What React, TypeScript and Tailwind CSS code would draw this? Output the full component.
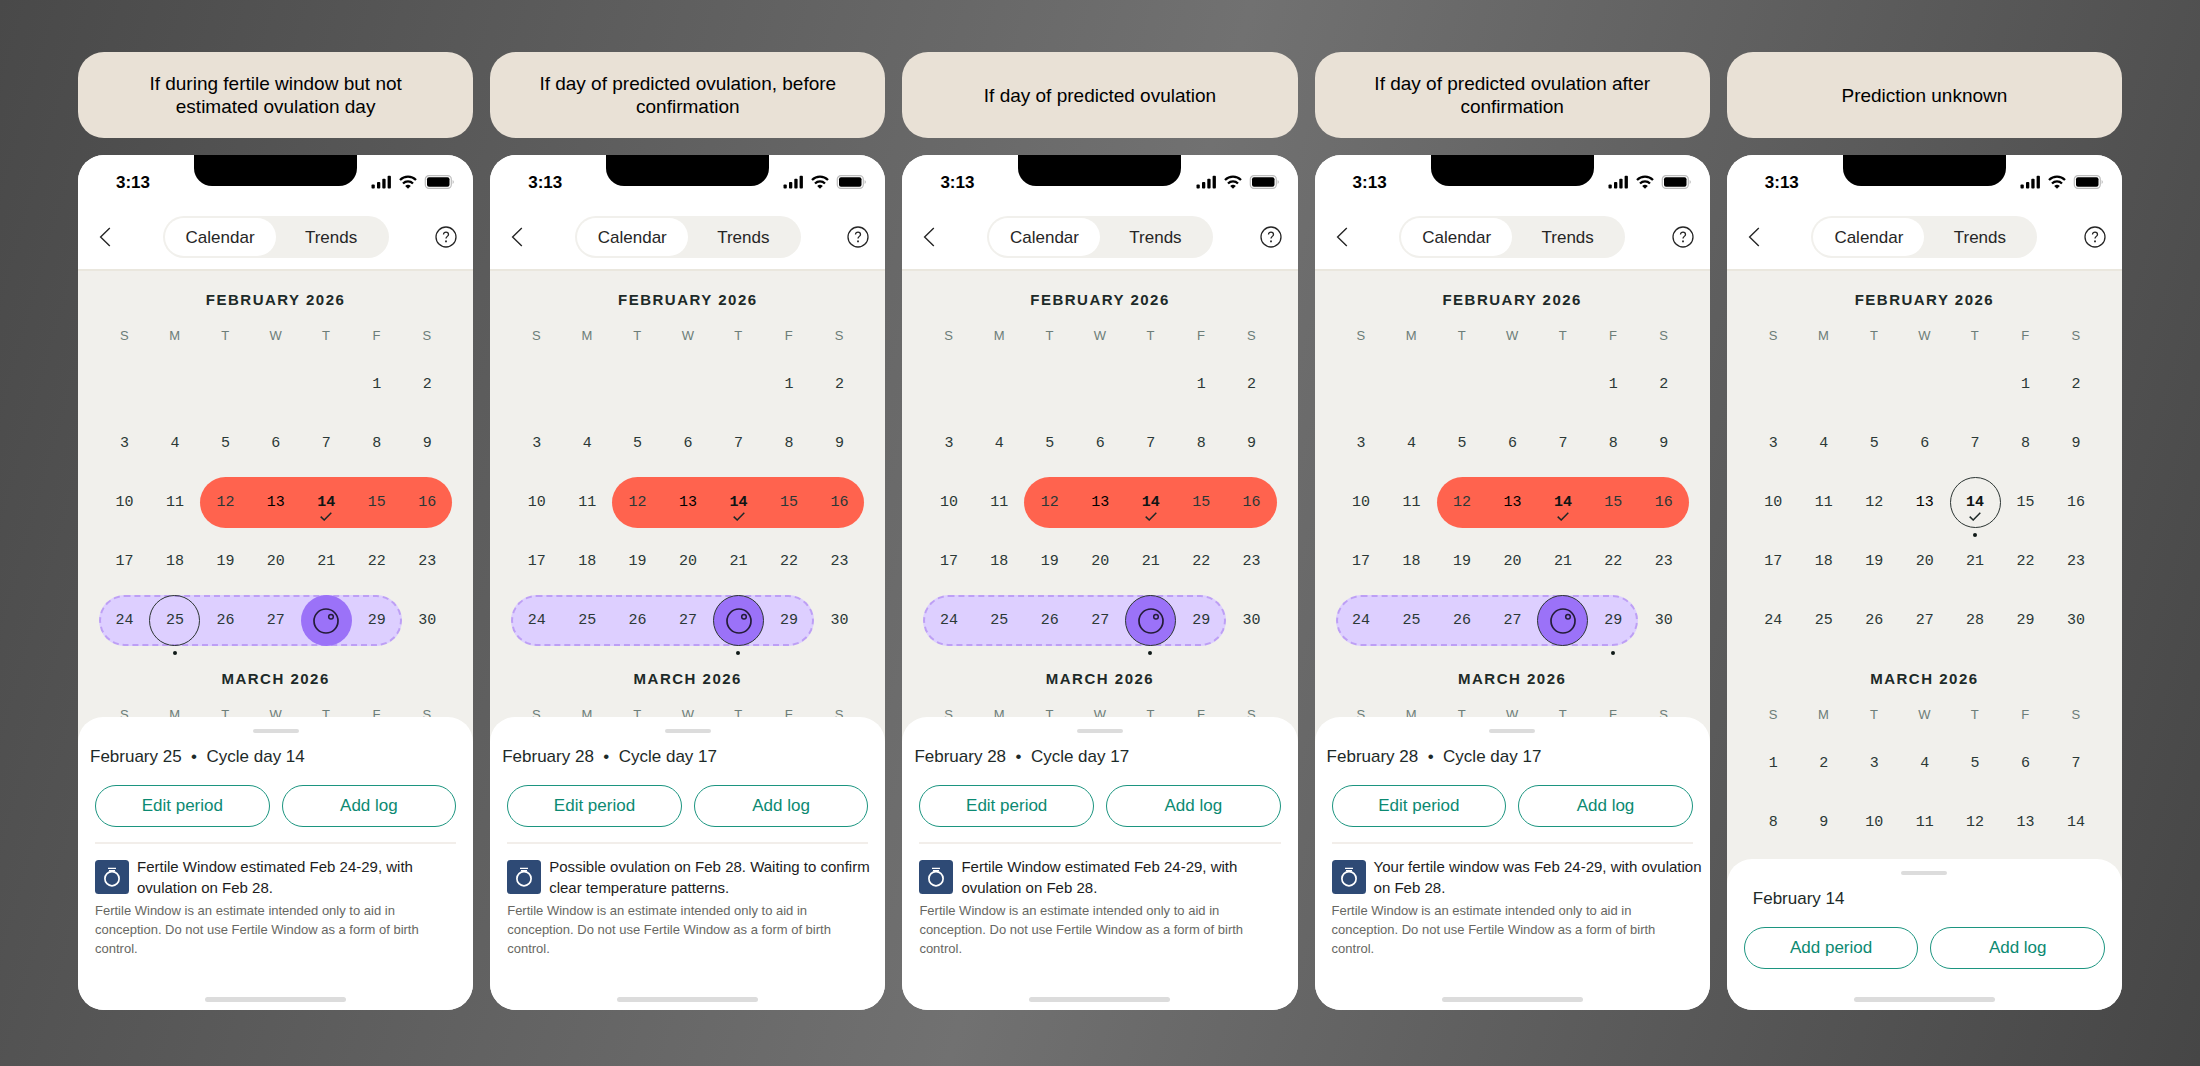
import React from "react";

type Range = { from: number; to: number };
type Phone = {
  label: string;
  title: string;
  inset?: boolean;
  periodAction: string;
  message?: string;
  period?: Range;
  fertile?: Range;
  ovulation?: number;
  selected: number;
  dot: number;
};

const DISCLAIMER =
  "Fertile Window is an estimate intended only to aid in conception. Do not use Fertile Window as a form of birth control.";
const PERIOD: Range = { from: 12, to: 16 };
const FERTILE: Range = { from: 24, to: 29 };
const ESTIMATED = "Fertile Window estimated Feb 24-29, with ovulation on Feb 28.";

const PHONES: Phone[] = [
  {
    label: "If during fertile window but not estimated ovulation day",
    title: "February 25  •  Cycle day 14",
    periodAction: "Edit period",
    message: ESTIMATED,
    period: PERIOD,
    fertile: FERTILE,
    ovulation: 28,
    selected: 25,
    dot: 25,
  },
  {
    label: "If day of predicted ovulation, before confirmation",
    title: "February 28  •  Cycle day 17",
    periodAction: "Edit period",
    message: "Possible ovulation on Feb 28. Waiting to confirm clear temperature patterns.",
    period: PERIOD,
    fertile: FERTILE,
    ovulation: 28,
    selected: 28,
    dot: 28,
  },
  {
    label: "If day of predicted ovulation",
    title: "February 28  •  Cycle day 17",
    periodAction: "Edit period",
    message: ESTIMATED,
    period: PERIOD,
    fertile: FERTILE,
    ovulation: 28,
    selected: 28,
    dot: 28,
  },
  {
    label: "If day of predicted ovulation after confirmation",
    title: "February 28  •  Cycle day 17",
    periodAction: "Edit period",
    message: "Your fertile window was Feb 24-29, with ovulation on Feb 28.",
    period: PERIOD,
    fertile: FERTILE,
    ovulation: 28,
    selected: 28,
    dot: 29,
  },
  {
    label: "Prediction unknown",
    title: "February 14",
    inset: true,
    periodAction: "Add period",
    selected: 14,
    dot: 14,
  },
];

function StatusIcons() {
  return (
    <svg width="83" height="14" viewBox="0 0 83 14" aria-hidden="true">
      <g fill="#000">
        <rect x="0.5" y="9.5" width="3.3" height="4" rx="0.9" />
        <rect x="6" y="7" width="3.3" height="6.5" rx="0.9" />
        <rect x="11.3" y="3.8" width="3.3" height="9.7" rx="0.9" />
        <rect x="16.6" y="0.8" width="3.3" height="12.7" rx="0.9" />
      </g>
      <g fill="none" stroke="#000" strokeWidth="2.3">
        <path d="M29 5a11.4 11.4 0 0 1 16 0" />
        <path d="M32 8.5a7.1 7.1 0 0 1 10 0" />
      </g>
      <path d="M34.2 11a4 4 0 0 1 5.6 0L37 13.8z" fill="#000" />
      <rect x="54.3" y="0.7" width="26" height="12.6" rx="3.6" fill="none" stroke="#bdbdbd" strokeWidth="1.2" />
      <rect x="56" y="2.2" width="22.5" height="9.6" rx="2" fill="#000" />
      <path d="M81.6 5c1 .5 1.2 1.2 1.2 2s-.2 1.5-1.2 2z" fill="#bdbdbd" />
    </svg>
  );
}

function EggIcon() {
  return (
    <svg width="26" height="26" viewBox="0 0 26 26" fill="none" stroke="#241c38" aria-hidden="true">
      <circle cx="13" cy="13" r="12" strokeWidth="1.7" />
      <circle cx="18" cy="8.7" r="2.3" strokeWidth="1.5" />
    </svg>
  );
}

function RingIcon() {
  return (
    <svg className="shrink-0" width="34" height="34" viewBox="0 0 34 34" fill="none" aria-hidden="true">
      <rect width="34" height="34" rx="3.5" fill="#2e4a75" />
      <path d="M13 8.4h8M14 10.6h6" stroke="#fff" strokeWidth="1.3" />
      <circle cx="17" cy="18.7" r="7.1" stroke="#fff" strokeWidth="1.7" />
    </svg>
  );
}

function DayCell({ day, phone }: { day: number; phone?: Phone }) {
  const ovulation = phone?.ovulation === day;
  const ring = phone?.selected === day;
  const dot = phone?.dot === day;
  const today = phone && day === 14;
  return (
    <td className="relative h-[59px] p-0 text-center">
      {phone?.period?.from === day && (
        <span className="absolute inset-y-1 left-0 -z-10 w-[500%] rounded-full bg-[#ff634e]" />
      )}
      {phone?.fertile?.from === day && (
        <span className="absolute inset-y-1 left-0 -z-10 w-[600%] rounded-full border-2 border-dashed border-[#bd9ff5] bg-[#ddcfff]" />
      )}
      <button
        type="button"
        aria-label={`Day ${day}`}
        className={`relative inline-flex size-[51px] items-center justify-center rounded-full border align-middle ${
          ring ? "border-[#2b3432]" : "border-transparent"
        } ${ovulation ? "bg-[#9b72f8]" : ""} ${today ? "font-bold text-[#101514]" : ""} ${
          phone && day === 13 ? "text-black" : ""
        }`}
      >
        {ovulation ? <EggIcon /> : <span className="pt-0.5">{day}</span>}
        {today && (
          <svg
            className="absolute bottom-[6px] left-1/2 -translate-x-1/2"
            width="12"
            height="9"
            viewBox="0 0 12 9"
            fill="none"
            stroke="#1d2827"
            strokeWidth="1.5"
            aria-hidden="true"
          >
            <path d="M.7 4.6 4.2 8 11.3.8" />
          </svg>
        )}
      </button>
      {dot && (
        <span className="absolute -bottom-[5px] left-1/2 size-[4px] -translate-x-1/2 rounded-full bg-[#101a18]" />
      )}
    </td>
  );
}

function Month({ name, weeks, phone }: { name: string; weeks: (number | null)[][]; phone?: Phone }) {
  return (
    <section className="px-[21px]">
      <h2 className="text-center text-[15px] leading-5 font-bold tracking-widest text-[#1d2a28]">{name}</h2>
      <table className="mt-4 w-full table-fixed border-collapse">
        <thead>
          <tr className="text-[13px] leading-5 text-[#6c7d78]">
            {["S", "M", "T", "W", "T", "F", "S"].map((d, i) => (
              <th key={i} scope="col" className="p-0 pb-[9px] font-normal">
                {d}
              </th>
            ))}
          </tr>
        </thead>
        <tbody className="font-['Liberation_Mono',monospace] text-[15px] text-[#2b3836]">
          {weeks.map((week, w) => (
            <tr key={w}>
              {week.map((day, i) =>
                day === null ? (
                  <td key={i} className="h-[59px] p-0" />
                ) : (
                  <DayCell key={i} day={day} phone={phone} />
                ),
              )}
            </tr>
          ))}
        </tbody>
      </table>
    </section>
  );
}

const FEBRUARY: (number | null)[][] = [
  [null, null, null, null, null, 1, 2],
  [3, 4, 5, 6, 7, 8, 9],
  [10, 11, 12, 13, 14, 15, 16],
  [17, 18, 19, 20, 21, 22, 23],
  [24, 25, 26, 27, 28, 29, 30],
];
const MARCH: (number | null)[][] = [
  [1, 2, 3, 4, 5, 6, 7],
  [8, 9, 10, 11, 12, 13, 14],
];

function PhoneHeader() {
  return (
    <header className="shrink-0 border-b-2 border-[#eae7de] bg-white">
      <div className="grid h-[54px] grid-cols-[1fr_auto_1fr] items-start">
        <span className="pt-4 pl-[38px] text-[17px] leading-6 font-bold text-black">3:13</span>
        <span className="h-[31px] w-[163px] rounded-b-[18px] bg-black" />
        <span className="flex justify-end pt-5 pr-[19px]">
          <StatusIcons />
        </span>
      </div>
      <div className="grid grid-cols-[1fr_auto_1fr] items-center pt-[7px] pb-[11px] text-[#262626]">
        <button type="button" aria-label="Back" className="flex h-[22px] items-center pl-[21px]">
          <svg width="12" height="20" viewBox="0 0 12 20" fill="none" stroke="#262626" strokeWidth="1.4">
            <path d="M10.8 1 1.6 10l9.2 9" />
          </svg>
        </button>
        <nav className="grid h-[42px] w-[226px] grid-cols-2 rounded-full bg-[#f1f0ec] p-[2px] text-[17px]">
          <button type="button" aria-pressed="true" className="rounded-full bg-white pt-px">
            Calendar
          </button>
          <button type="button" aria-pressed="false" className="rounded-full pt-px">
            Trends
          </button>
        </nav>
        <button type="button" aria-label="Help" className="flex h-[22px] justify-end pr-4">
          <svg width="22" height="22" viewBox="0 0 22 22" fill="none" stroke="#262626" strokeWidth="1.3">
            <circle cx="11" cy="11" r="10" />
            <path d="M8.5 8.6c0-1.6 1.1-2.5 2.5-2.5s2.5.9 2.5 2.3c0 1.9-2.5 2.1-2.5 4.2" />
            <path d="M11 14.4v1.8" strokeWidth="1.8" />
          </svg>
        </button>
      </div>
    </header>
  );
}

function Sheet({ phone }: { phone: Phone }) {
  const action = "h-[42px] flex-1 rounded-full border border-[#1c9580] text-[17px] text-[#0c8a72]";
  return (
    <div className="relative z-10 -mt-[25px] flex shrink-0 flex-col rounded-t-[25px] bg-white px-[17px] pt-3 pb-2">
      <span className="h-1 w-[46px] self-center rounded-full bg-[#dcdcdc]" />
      <h3
        className={`mt-3 text-[17px] leading-6 whitespace-pre text-[#1d2a28] ${
          phone.inset ? "pl-[9px]" : "-ml-[5px]"
        }`}
      >
        {phone.title}
      </h3>
      <div className="mt-4 flex gap-3">
        <button type="button" className={action}>
          {phone.periodAction}
        </button>
        <button type="button" className={action}>
          Add log
        </button>
      </div>
      {phone.message ? (
        <div className="mt-[15px] mb-[39px] border-t-2 border-[#f2eeea] pt-3">
          <div className="-mr-3 flex items-center gap-2">
            <RingIcon />
            <p className="text-[15px] leading-[21px] text-[#1c1c1c]">{phone.message}</p>
          </div>
          <p className="mt-[3px] text-[13px] leading-[19px] text-[#676762]">{DISCLAIMER}</p>
        </div>
      ) : (
        <div className="h-[28px]" />
      )}
      <span className="h-[5px] w-[141px] self-center rounded-full bg-[#dcdcdc]" />
    </div>
  );
}

export default function App() {
  return (
    <main className="grid h-screen min-h-[900px] grid-cols-5 gap-[17px] bg-linear-[106deg,#494949,#717171_50%,#464646] px-[78px] pt-[52px] pb-[56px] font-['Liberation_Sans',Arial,sans-serif]">
      {PHONES.map((phone) => (
        <div key={phone.label} className="flex min-h-0 min-w-0 flex-col gap-[17px]">
          <h1 className="flex h-[86px] shrink-0 items-center justify-center rounded-[26px] bg-[#e9e1d6] px-10 text-center text-[19px] leading-[23px] text-black">
            <span>{phone.label}</span>
          </h1>
          <article className="flex min-h-0 flex-1 flex-col overflow-hidden rounded-[26px] bg-white">
            <PhoneHeader />
            <div className="isolate min-h-0 flex-1 overflow-hidden bg-[#f1f0ec] pt-[19px]">
              <Month name="FEBRUARY 2026" weeks={FEBRUARY} phone={phone} />
              <div className="h-[19px]" />
              <Month name="MARCH 2026" weeks={phone.message ? [] : MARCH} />
            </div>
            <Sheet phone={phone} />
          </article>
        </div>
      ))}
    </main>
  );
}
